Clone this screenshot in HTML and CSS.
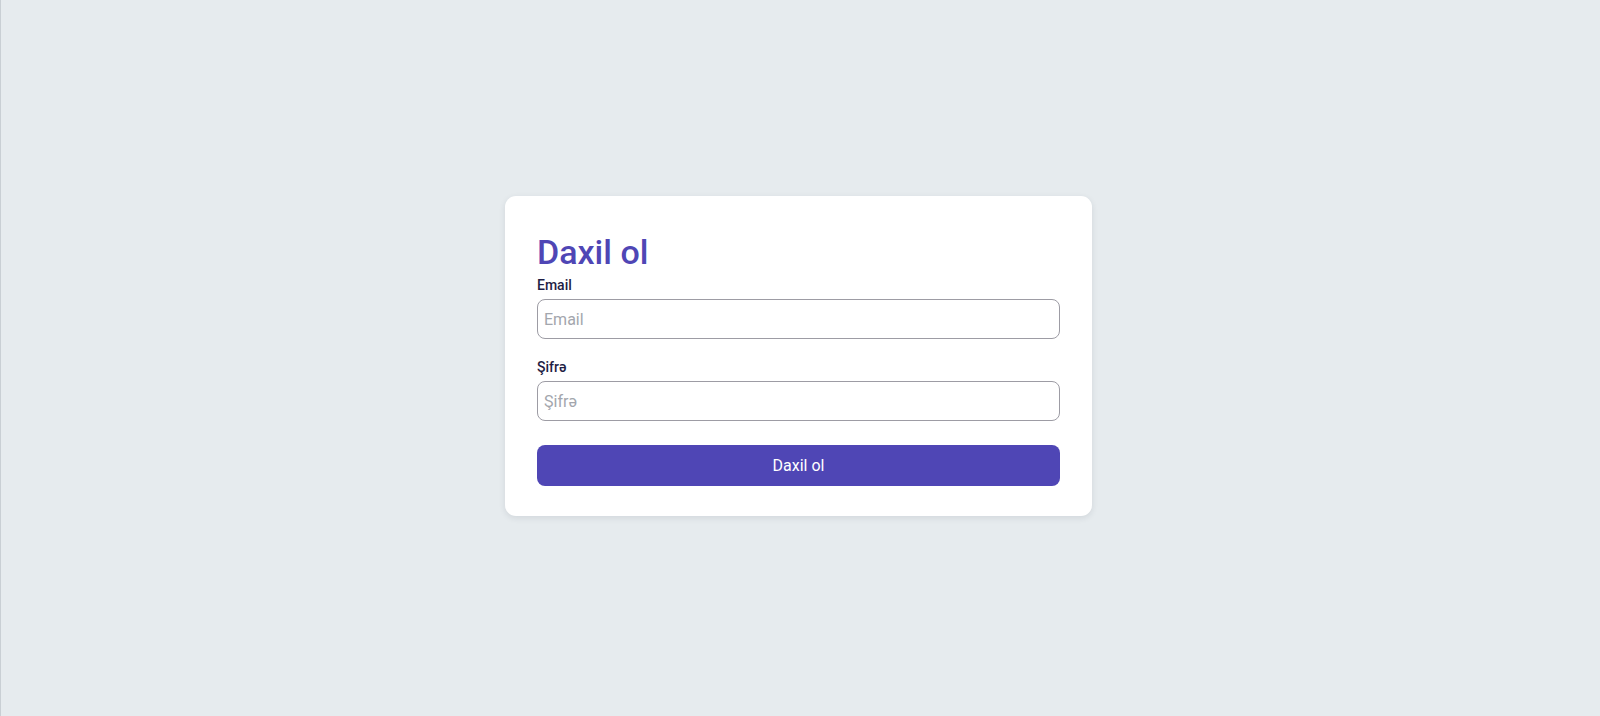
FILE: index.html
```html
<!DOCTYPE html>
<html lang="az">
<head>
<meta charset="utf-8">
<title>Daxil ol</title>
<link rel="stylesheet" href="styles.css">
</head>
<body>
<div class="page">
  <form class="card">
    <h1 class="title">Daxil ol</h1>
    <div class="field">
      <label class="label" for="email">Email</label>
      <input class="input" id="email" type="email" placeholder="Email">
    </div>
    <div class="field">
      <label class="label" for="password">Şifrə</label>
      <input class="input" id="password" type="password" placeholder="Şifrə">
    </div>
    <button class="button" type="button">Daxil ol</button>
  </form>
</div>
</body>
</html>
```
FILE: styles.css
```css
* { box-sizing: border-box; }
html, body { margin: 0; padding: 0; }
body {
  font-family: Roboto, "Liberation Sans", Arial, sans-serif;
  background: #e6ebee;
}
.page {
  min-height: 100vh;
  border-left: 1px solid #c9cfd4;
  display: flex;
  align-items: center;
  justify-content: center;
}
.card {
  width: 587px;
  margin: 0 4px 4px 0;
  background: #ffffff;
  border-radius: 11px;
  padding: 32px 32px 30px;
  box-shadow: 0 2px 6px rgba(30, 40, 60, 0.10);
  display: flex;
  flex-direction: column;
}
.title {
  margin: 4px 0 5px;
  font-size: 34px;
  line-height: 40px;
  font-weight: 500;
  color: #4f46b5;
}
.field {
  display: flex;
  flex-direction: column;
  margin-bottom: 20px;
}
.field + .field { margin-bottom: 24px; }
.label {
  font-size: 14px;
  line-height: 17px;
  font-weight: 500;
  color: #1f1e45;
  margin-bottom: 5px;
}
.input {
  height: 40px;
  border: 1px solid #9d9ca4;
  border-radius: 8px;
  padding: 0 6px;
  font-family: inherit;
  font-size: 16px;
  color: #222;
  background: #fff;
  outline: none;
}
.input::placeholder { color: #a3a6ad; }
.button {
  height: 41px;
  border: none;
  border-radius: 8px;
  background: #4f46b5;
  color: #ffffff;
  font-family: inherit;
  font-size: 16px;
  font-weight: 400;
  cursor: pointer;
}
```
